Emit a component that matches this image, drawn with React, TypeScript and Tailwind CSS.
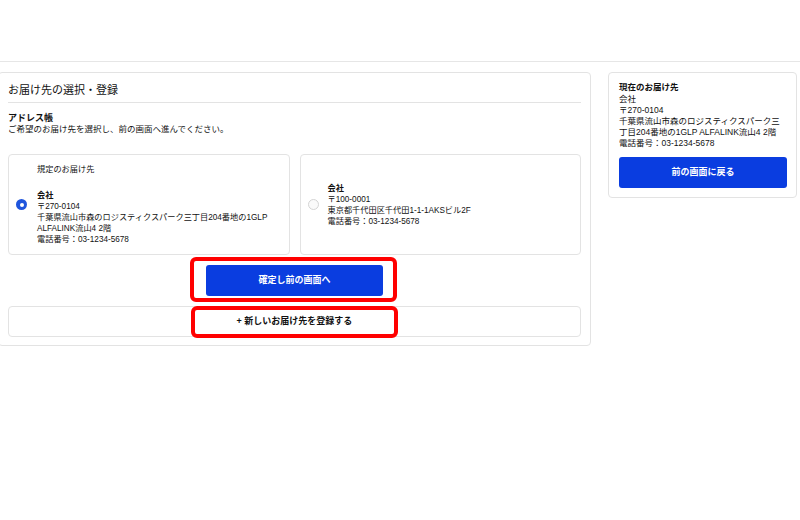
function Radio({ checked }: { checked?: boolean }) {
  if (checked) {
    return (
      <div className="w-[11px] h-[11px] shrink-0 rounded-full bg-[#1f55dd] flex items-center justify-center">
        <div className="w-[4px] h-[4px] rounded-full bg-white" />
      </div>
    );
  }
  return <div className="w-[11px] h-[11px] shrink-0 rounded-full border border-[#d4d4d4] bg-[#fafafa]" />;
}

export default function App() {
  return (
    <div className="w-[800px] h-[520px] bg-white overflow-hidden text-[#111] font-['Liberation_Sans','Noto_Sans_CJK_JP',sans-serif]">
      <div className="h-[62px] border-b border-[#e6e6e6]" />
      <div className="flex items-start mt-[10px]">
        <div className="-ml-[2px] w-[593px] shrink-0 border border-[#e3e3e3] rounded-[4px] px-[9px] pt-[10px] pb-[8px]">
          <div className="text-[11px] leading-[14px] pb-[5px] border-b border-[#e3e3e3]">お届け先の選択・登録</div>
          <div className="mt-[10px] text-[8.5px] leading-[11px]">
            <div className="font-bold text-[9px]">アドレス帳</div>
            <div>ご希望のお届け先を選択し、前の画面へ進んでください。</div>
          </div>
          <div className="mt-[19px] grid grid-cols-2 gap-[10px] text-[8.2px] leading-[11px]">
            <div className="border border-[#e3e3e3] rounded-[4px] pl-[7px] pr-[8px] py-[9px] flex items-center gap-[10px]">
              <Radio checked />
              <div>
                <div className="mb-[15px]">規定のお届け先</div>
                <div className="font-bold">会社</div>
                <div>〒270-0104</div>
                <div>千葉県流山市森のロジスティクスパーク三丁目204番地の1GLP ALFALINK流山4 2階</div>
                <div>電話番号：03-1234-5678</div>
              </div>
            </div>
            <div className="border border-[#e3e3e3] rounded-[4px] pl-[7px] pr-[8px] py-[9px] flex items-center gap-[9px]">
              <Radio />
              <div>
                <div className="font-bold">会社</div>
                <div>〒100-0001</div>
                <div>東京都千代田区千代田1-1-1AKSビル2F</div>
                <div>電話番号：03-1234-5678</div>
              </div>
            </div>
          </div>
          <div className="mt-[10px] relative flex justify-center">
            <button className="w-[177px] h-[31px] rounded-[3px] bg-[#0a3de0] text-white text-[9px] font-bold">確定し前の画面へ</button>
            <div className="absolute left-[182px] top-[-8px] w-[207px] h-[45px] border-[4px] border-[#ff0000] rounded-[6px]" />
          </div>
          <div className="mt-[10px] relative h-[31px] border border-[#e3e3e3] rounded-[4px] flex items-center justify-center text-[9px] font-bold">
            + 新しいお届け先を登録する
            <div className="absolute left-[182px] top-[-1px] w-[207px] h-[32px] border-[4px] border-[#ff0000] rounded-[6px]" />
          </div>
        </div>
        <div className="ml-[17px] w-[189px] shrink-0 border border-[#e3e3e3] rounded-[4px] pl-[10px] pr-[9px] pt-[9px] pb-[9px] text-[8.5px] leading-[11px]">
          <div className="font-bold mb-[1px]">現在のお届け先</div>
          <div>会社</div>
          <div>〒270-0104</div>
          <div>千葉県流山市森のロジスティクスパーク三丁目204番地の1GLP ALFALINK流山4 2階</div>
          <div>電話番号：03-1234-5678</div>
          <button className="mt-[8px] w-full h-[31px] rounded-[3px] bg-[#0a3de0] text-white text-[9px] font-bold">前の画面に戻る</button>
        </div>
      </div>
    </div>
  );
}
